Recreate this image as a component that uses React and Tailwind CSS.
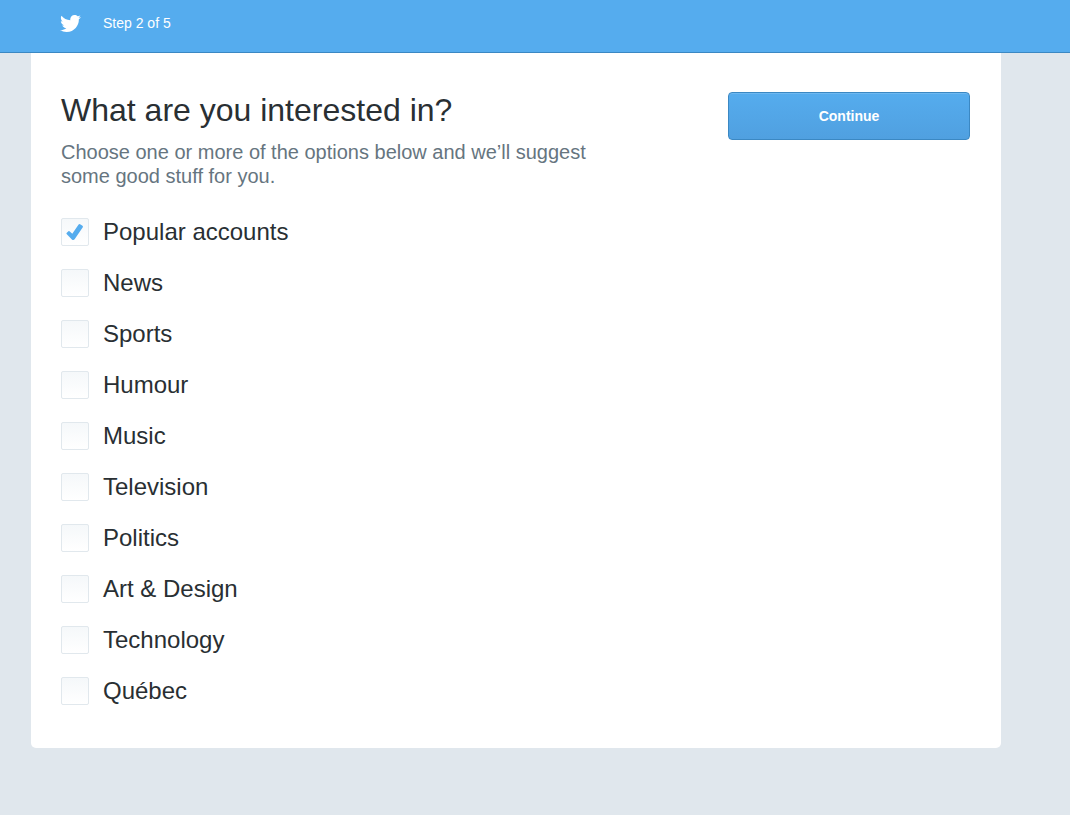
import { useState } from "react";
import { FaTwitter } from "react-icons/fa";

const interests = [
  "Popular accounts",
  "News",
  "Sports",
  "Humour",
  "Music",
  "Television",
  "Politics",
  "Art & Design",
  "Technology",
  "Québec",
];

function Header() {
  return (
    <header className="border-b border-[#3b88c3] bg-[#55acee]">
      <div className="ml-[31px] flex h-[52px] items-start gap-[21px] pr-[31px] pl-[29px] pt-[13px] text-white">
        <FaTwitter className="h-[21px] w-[21px]" aria-label="Twitter" />
        <span className="pl-px text-[14px] leading-5">Step 2 of 5</span>
      </div>
    </header>
  );
}

function Interest({ label, initial }) {
  const [checked, setChecked] = useState(initial);
  return (
    <li>
      <label className="flex w-fit items-center gap-[14px] text-2xl leading-7">
        <span className="grid size-7 place-items-center">
          <input
            type="checkbox"
            checked={checked}
            onChange={(e) => setChecked(e.target.checked)}
            className="col-start-1 row-start-1 size-7 appearance-none rounded-[2px] border border-[#e1e8ed] bg-linear-to-b from-[#f5f8fa] to-white"
          />
          {checked && (
            <svg viewBox="0 0 18 18" className="pointer-events-none col-start-1 row-start-1 size-[18px]" aria-hidden="true">
              <path
                d="M0.6 9.9 L2.4 8.2 Q3 7.8 3.5 8.2 L6.3 10.8 L12.6 1.6 Q13.2 0.8 14.1 1.3 L16.5 2.8 Q17.3 3.4 16.8 4.2 L8.8 16.1 Q7.4 17.8 5.9 16.4 L0.6 11 Q0.2 10.4 0.6 9.9 Z"
                fill="#55acee"
              />
            </svg>
          )}
        </span>
        {label}
      </label>
    </li>
  );
}

export default function App() {
  return (
    <div className="min-h-screen bg-[#e0e7ed] font-['Liberation_Sans',Arial,sans-serif] text-[#292f33]">
      <Header />
      <main className="mr-8 ml-[31px] max-w-[970px] rounded-b-[5px] bg-white pr-[31px] pl-[30px] pt-[39px] pb-[43px]">
        <div className="flex items-start justify-between gap-8">
          <div className="max-w-[560px]">
            <h1 className="text-[32px] leading-9">What are you interested in?</h1>
            <p className="mt-3 text-xl leading-6 text-[#66757f]">
              Choose one or more of the options below and we’ll suggest some good stuff for you.
            </p>
          </div>
          <button
            type="button"
            className="h-12 w-[242px] shrink-0 rounded-[4px] border border-[#3b88c3] bg-linear-to-b from-[#55acee] to-[#50a0e0] text-[14px] font-bold text-white shadow-[inset_0_1px_0_rgba(255,255,255,0.15)]"
          >
            Continue
          </button>
        </div>
        <ul className="mt-[30px] flex flex-col gap-[23px]">
          {interests.map((label, i) => (
            <Interest key={label} label={label} initial={i === 0} />
          ))}
        </ul>
      </main>
    </div>
  );
}
